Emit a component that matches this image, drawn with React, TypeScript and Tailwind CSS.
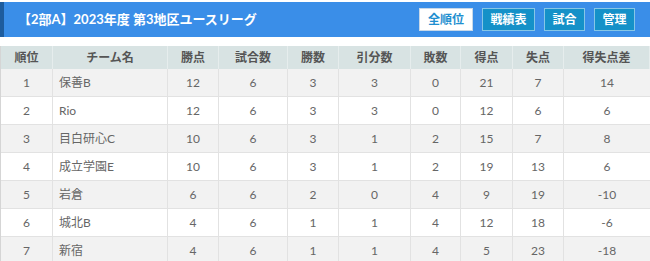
const rows = [
  { rank: 1, name: '保善B', pts: 12, played: 6, win: 3, draw: 3, lose: 0, gf: 21, ga: 7, diff: 14 },
  { rank: 2, name: 'Rio', pts: 12, played: 6, win: 3, draw: 3, lose: 0, gf: 12, ga: 6, diff: 6 },
  { rank: 3, name: '目白研心C', pts: 10, played: 6, win: 3, draw: 1, lose: 2, gf: 15, ga: 7, diff: 8 },
  { rank: 4, name: '成立学園E', pts: 10, played: 6, win: 3, draw: 1, lose: 2, gf: 19, ga: 13, diff: 6 },
  { rank: 5, name: '岩倉', pts: 6, played: 6, win: 2, draw: 0, lose: 4, gf: 9, ga: 19, diff: -10 },
  { rank: 6, name: '城北B', pts: 4, played: 6, win: 1, draw: 1, lose: 4, gf: 12, ga: 18, diff: -6 },
  { rank: 7, name: '新宿', pts: 4, played: 6, win: 1, draw: 1, lose: 4, gf: 5, ga: 23, diff: -18 },
]

const cols = [
  { label: '順位', w: 'w-[52px]' },
  { label: 'チーム名', w: 'w-[115px]' },
  { label: '勝点', w: 'w-[51px]' },
  { label: '試合数', w: 'w-[69px]' },
  { label: '勝数', w: 'w-[51px]' },
  { label: '引分数', w: 'w-[72px]' },
  { label: '敗数', w: 'w-[50px]' },
  { label: '得点', w: 'w-[52px]' },
  { label: '失点', w: 'w-[51px]' },
  { label: '得失点差', w: 'flex-1' },
]

const font = { fontFamily: 'Lato, "Noto Sans CJK JP", sans-serif' }

export default function App() {
  return (
    <div className="w-[650px] h-[261px] overflow-hidden bg-white pt-[2px]" style={font}>
      {/* ヘッダー */}
      <header className="h-[35px] bg-[#3a8ee8] border-l-[4px] border-[#1d5c9e] flex items-center justify-between pl-[14px] pr-[15px]">
        <h1 className="text-[13px] font-bold text-white">【2部A】2023年度 第3地区ユースリーグ</h1>
        <div className="flex gap-[9px]">
          <button className="h-[23px] w-[54px] bg-white border border-[#c8d8e8] text-[#1f8fd0] text-[12px] font-bold">全順位</button>
          <button className="h-[23px] w-[53px] bg-[#1591c8] border border-[#86c6e6] text-white text-[12px] font-bold">戦績表</button>
          <button className="h-[23px] w-[41px] bg-[#1591c8] border border-[#86c6e6] text-white text-[12px] font-bold">試合</button>
          <button className="h-[23px] w-[41px] bg-[#1591c8] border border-[#86c6e6] text-white text-[12px] font-bold">管理</button>
        </div>
      </header>

      {/* 順位表 */}
      <div className="mt-[9px] border-l border-[#d5d5d5]">
        <div className="flex h-[23px] bg-[#d8e3e3] text-[12px] font-bold text-[#555]">
          {cols.map((c) => (
            <div key={c.label} className={`${c.w} flex items-center justify-center border-r border-[#e6eded]`}>
              {c.label}
            </div>
          ))}
        </div>
        {rows.map((r, i) => (
          <div
            key={r.rank}
            className={`flex h-[28px] text-[12px] text-[#666] border-b border-[#e2e2e2] ${i % 2 === 0 ? 'bg-[#f2f2f2]' : 'bg-white'}`}
          >
            <div className="w-[52px] flex items-center justify-center border-r border-[#e2e2e2]">{r.rank}</div>
            <div className="w-[115px] flex items-center pl-[6px] border-r border-[#e2e2e2]">{r.name}</div>
            <div className="w-[51px] flex items-center justify-center border-r border-[#e2e2e2]">{r.pts}</div>
            <div className="w-[69px] flex items-center justify-center border-r border-[#e2e2e2]">{r.played}</div>
            <div className="w-[51px] flex items-center justify-center border-r border-[#e2e2e2]">{r.win}</div>
            <div className="w-[72px] flex items-center justify-center border-r border-[#e2e2e2]">{r.draw}</div>
            <div className="w-[50px] flex items-center justify-center border-r border-[#e2e2e2]">{r.lose}</div>
            <div className="w-[52px] flex items-center justify-center border-r border-[#e2e2e2]">{r.gf}</div>
            <div className="w-[51px] flex items-center justify-center border-r border-[#e2e2e2]">{r.ga}</div>
            <div className="flex-1 flex items-center justify-center">{r.diff}</div>
          </div>
        ))}
      </div>
    </div>
  )
}
